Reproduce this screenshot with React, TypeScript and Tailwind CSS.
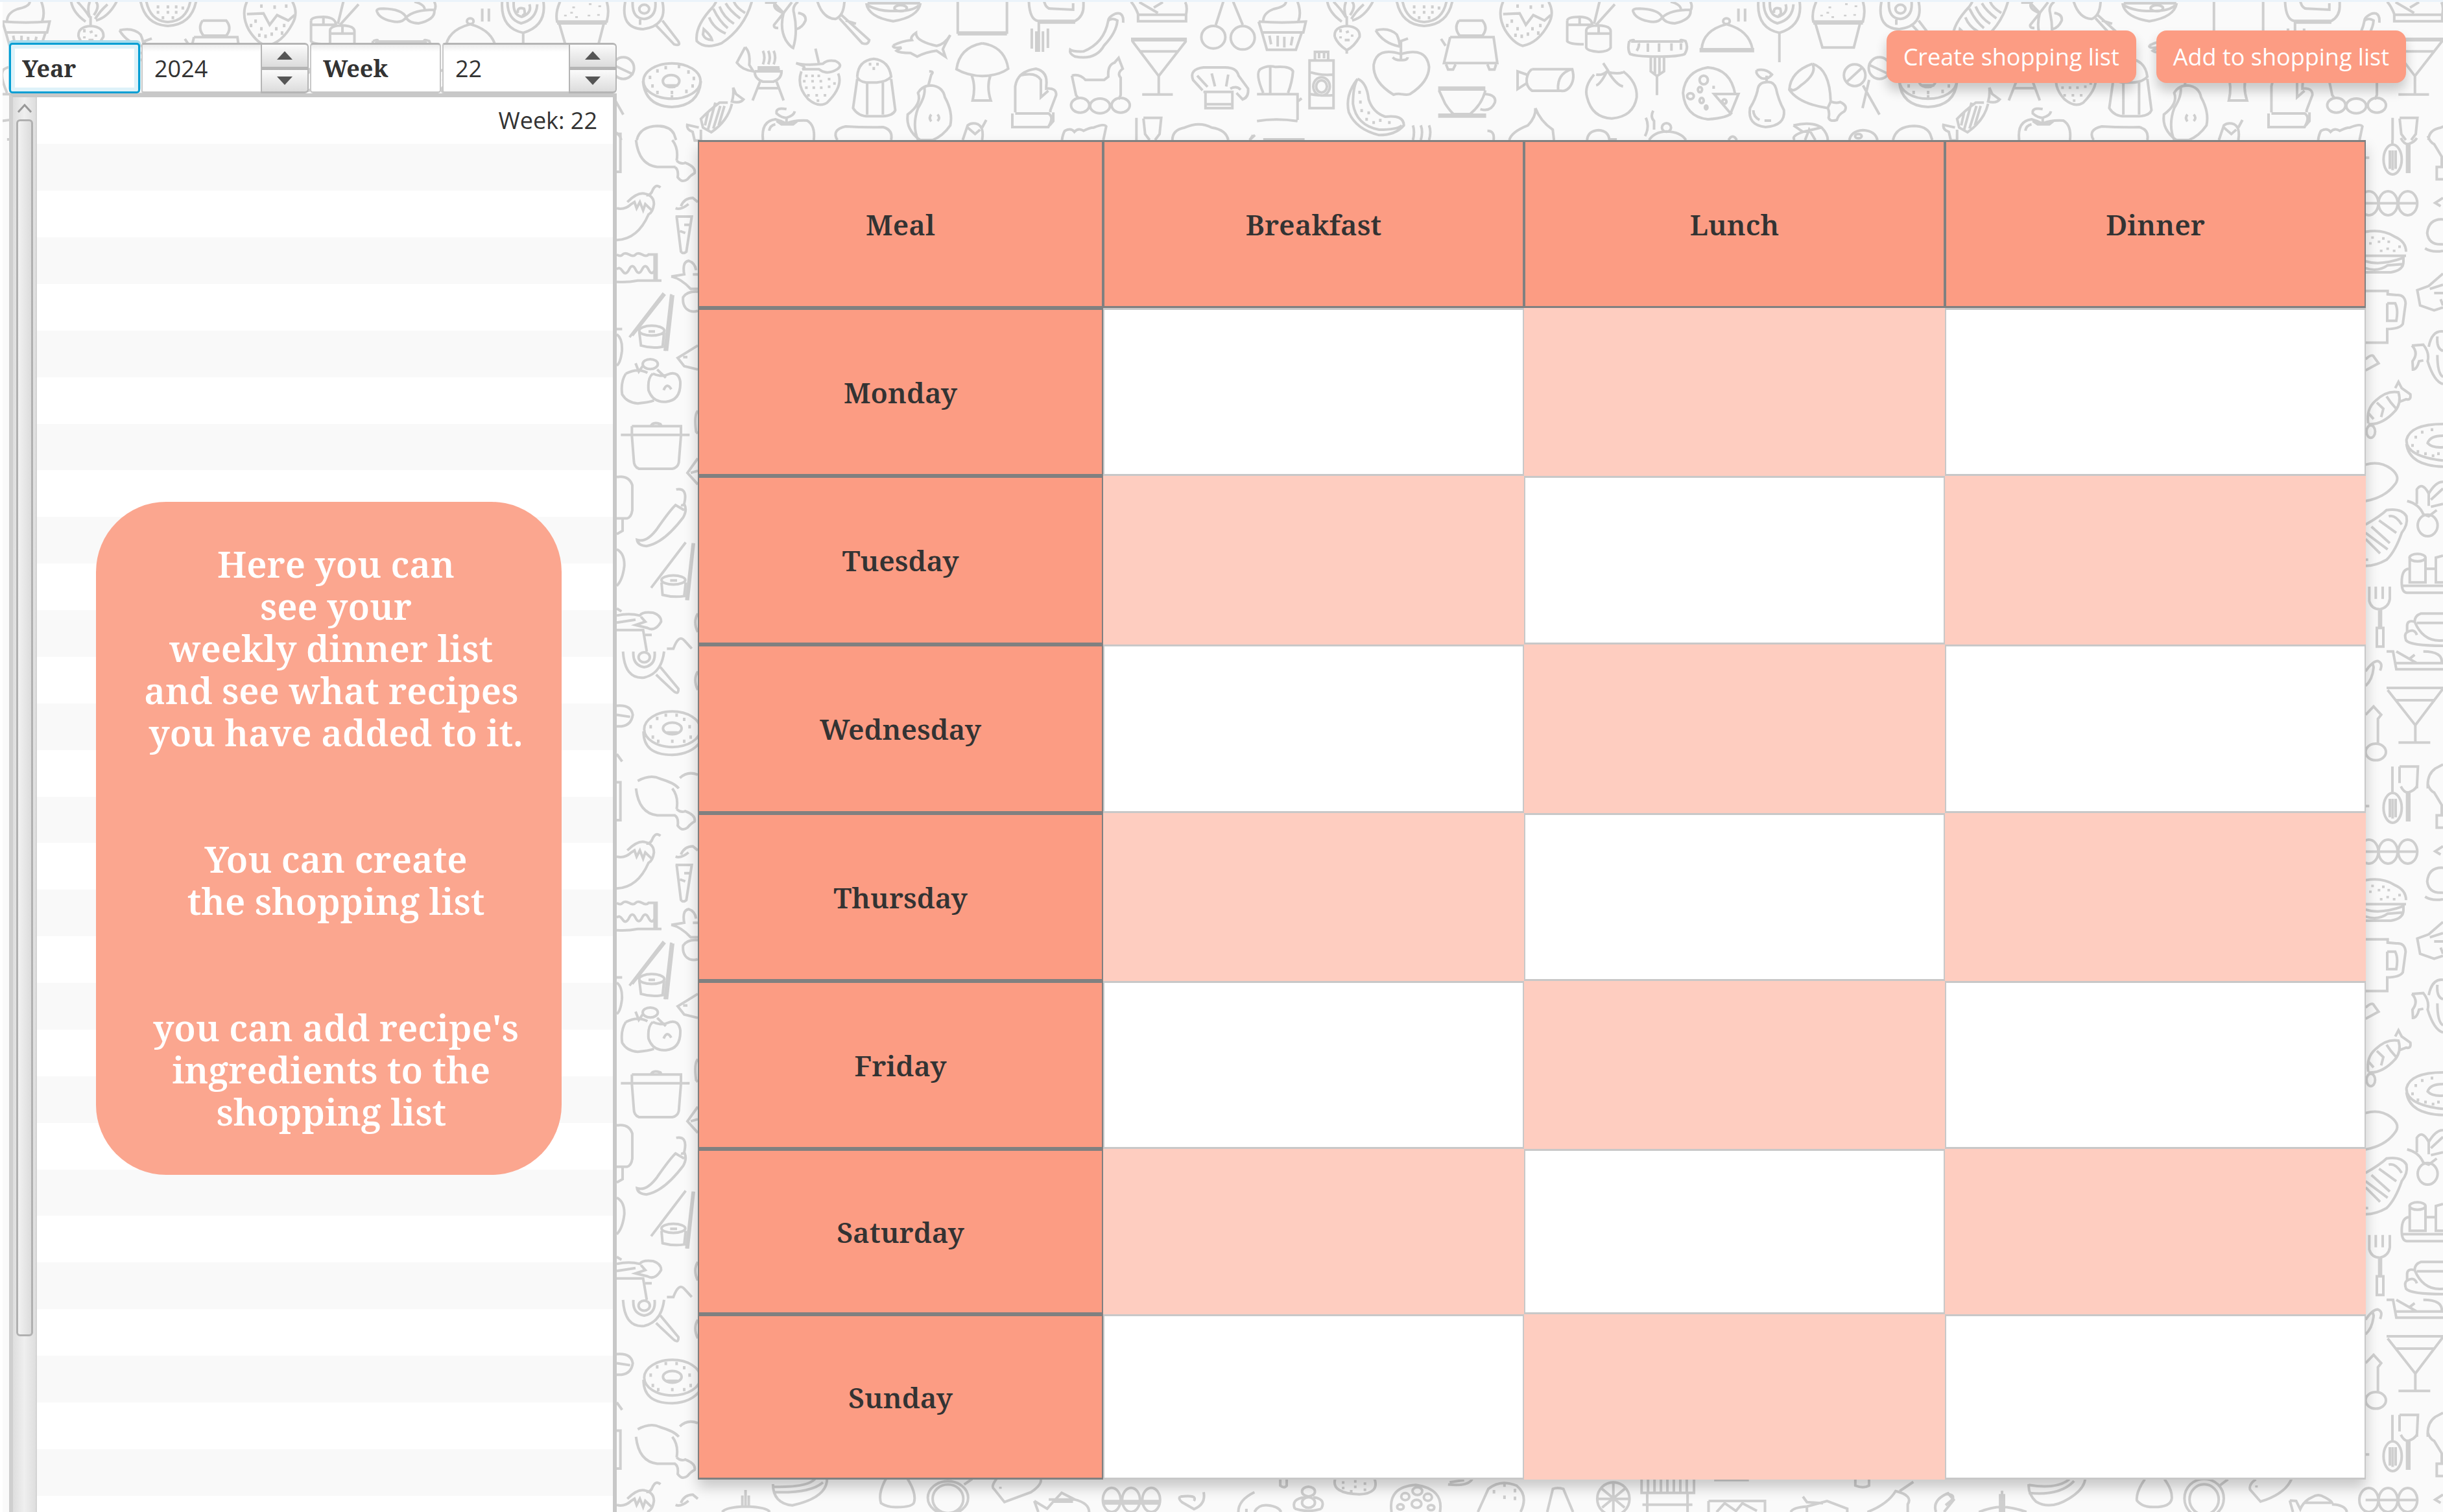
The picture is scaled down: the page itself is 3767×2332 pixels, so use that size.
import { useState } from 'react';

const oval = (cx: number, cy: number, rx: number, ry: number) =>
  `M${cx - rx} ${cy}a${rx} ${ry} 0 1 0 ${rx * 2} 0a${rx} ${ry} 0 1 0 ${-rx * 2} 0`;

const dots = (size: number, ...points: [number, number][]) =>
  points.map(([x, y]) => `M${x} ${y}v${size}`).join('');

/* Food doodles, upper band, first half of the repeat */
const upperLeft = [
  // cupcake
  'M64 100Q120 108 178 100L172 150H72L64 100M75 98Q75 60 100 42Q130 30 130 8M158 8Q168 60 160 98M72 150L84 230H154L168 152M90 165L94 205M110 165V215M126 170V220M146 170L142 210',
  // radish
  'M230 8Q235 60 265 100M245 8Q262 40 275 80Q268 40 275 8M290 8Q300 30 285 70M340 8Q320 80 290 95M318 20Q300 50 288 88M277 75V120M248 170Q245 125 277 120Q310 125 308 170Q295 215 277 232Q255 205 248 170M277 232V248M262 135V150M275 150L282 145M290 160V170M262 168V178M272 185H284',
  // watermelon
  'M398 8Q410 115 464 120Q520 115 532 8M412 8Q422 98 464 102Q508 98 518 8' +
    dots(14, [440, 25], [464, 25], [484, 25], [440, 50], [464, 50], [484, 50], [452, 75], [476, 75], [500, 30]),
  // apple
  'M408 250Q350 215 342 300Q340 380 390 438Q400 432 410 436Q425 440 430 435Q475 380 476 310Q470 215 408 250M388 265Q395 280 408 278Q424 280 424 265M408 275V190L425 178M347 140Q380 125 398 160Q405 190 405 215Q365 200 347 140',
  // mixer
  'M548 95H605Q620 130 605 165H550Q535 130 548 95M527 172H632L641 292H512L527 172M505 180L516 212M517 298L522 322H534L540 298M617 298L622 322H634L638 298',
  // decorated egg
  'M655 8Q640 70 660 140Q680 200 702 212Q740 200 765 110Q780 60 765 8M655 65L695 62L710 115L728 70L755 95L770 70' +
    dots(16, [690, 20], [722, 25], [750, 20], [676, 90], [690, 125], [665, 110], [726, 125], [745, 110], [700, 160], [715, 150], [740, 145], [685, 155]),
  // shakers
  'M810 95Q812 78 840 78Q868 80 870 110V125M810 95V190Q815 205 850 205M812 115H870M840 80V115M856 140Q858 118 886 118Q915 120 915 145V220Q910 238 886 240Q858 236 856 220ZM858 155H914M886 120V150M888 8L875 110M925 20L880 115',
  // beans
  'M970 55Q965 40 985 40Q1030 42 1040 80Q1030 110 1005 98Q975 85 970 55M1040 80Q1060 45 1108 45Q1112 90 1070 108Q1045 105 1040 80M1060 8Q1085 20 1085 45M1108 8Q1114 30 1108 50',
  // sausage on a fork
  'M960 190Q955 230 962 250Q980 262 1028 262Q1080 262 1094 250Q1104 220 1096 190Q1080 180 1085 192H970Q975 180 960 190M978 235Q985 215 983 200M1005 200V240M1032 200V240M1062 200V235M1085 200V230M1012 264V330L1027 352L1044 330V264M1022 264V345M1033 264V345M1027 352V440',
  // cloche
  'M1130 228H1262M1130 236H1262M1135 228Q1138 140 1195 112Q1250 140 1258 228M1224 40V100M1240 40V100' + oval(1195, 98, 8, 13),
  // lollipop
  'M1272 8Q1268 130 1323 152Q1380 120 1372 8M1285 8Q1285 90 1318 108Q1355 90 1357 20M1300 8Q1298 70 1320 78Q1345 60 1338 20M1310 60Q1308 30 1325 40Q1330 70 1320 72M1323 155V288',
  // ice cream tub
  'M1412 8Q1400 60 1405 100H1525Q1532 50 1525 8M1405 108H1525M1410 108L1427 220H1503L1518 108' +
    dots(8, [1445, 30], [1440, 55], [1425, 68], [1452, 75], [1485, 15], [1508, 25], [1482, 68], [1505, 65]),
  // ketchup
  'M200 275V240H232V275M187 500V280H245V500ZM190 335Q215 350 245 345M187 435Q215 445 245 440M210 245V270M222 245V270' + oval(216, 400, 20, 42) + oval(216, 400, 13, 28),
  // muffin pot
  'M75 430Q55 340 68 320Q85 300 105 310Q140 305 147 330Q145 380 135 430M92 430V312M60 436H158V555M60 560Q105 545 158 560M158 470L168 455',
  // melon slice
  'M303 365Q325 380 330 460Q340 520 370 540Q415 530 415 580Q395 625 355 625Q300 600 282 520Q272 440 303 365M303 365Q292 400 292 480Q300 580 355 600Q400 600 410 580' +
    dots(14, [308, 420], [310, 465], [313, 505], [330, 515], [325, 545], [342, 560], [358, 550], [380, 560]),
  // cup
  'M498 406H612M498 414H612M500 418L515 480Q525 510 535 528H575Q605 480 612 418M612 435Q640 440 635 475Q625 520 600 505M498 531H614M498 539H614',
  'M437 580Q442 610 437 648M456 580Q462 610 456 648M476 580Q482 610 476 648',
  // roll
  'M725 320H822Q830 370 815 405Q805 425 795 420H725Q710 400 712 365Q715 330 725 320M822 320Q785 340 788 415M712 345L690 330V412L712 385',
  // tomato
  'M897 292L910 330M880 345Q895 350 905 332Q930 345 945 335M905 335Q890 390 880 395M910 335Q930 395 945 400M875 345Q850 400 858 450Q870 545 918 548Q970 540 978 450Q980 380 945 330',
  // pizza
  'M1216 435Q1205 320 1150 312Q1095 330 1090 430Q1095 540 1150 552Q1200 545 1208 520M1165 435H1224L1205 525Z' +
    oval(1140, 370, 10, 20) + oval(1108, 445, 8, 14) + oval(1135, 465, 5, 12) + oval(1131, 415, 5, 12) + oval(1146, 497, 3, 9) + oval(1190, 470, 5, 10) + dots(14, [1164, 397]),
  // pear
  'M1292 380Q1272 380 1270 420Q1265 460 1252 500Q1245 580 1290 588Q1338 580 1334 510Q1320 460 1315 410Q1310 375 1292 380M1292 375V350M1268 325Q1290 315 1305 345Q1295 370 1280 362Q1265 345 1268 325M1260 510Q1260 540 1275 555M1287 558H1303',
  // ham
  'M1403 295Q1445 320 1447 470L1440 500Q1370 480 1347 415Q1350 330 1403 295M1403 295Q1415 340 1375 395Q1355 430 1350 410M1447 470Q1460 480 1470 472Q1490 490 1480 515Q1465 530 1462 555Q1445 565 1442 545Q1445 520 1440 500',
  // balloons of parsley
  oval(1505, 348, 26, 50) + oval(1565, 315, 26, 50) + 'M1485 380L1525 310M1540 300L1590 345M1525 395L1565 530M1540 370L1524 500',
  // tops of the next row
  'M733 500Q735 540 715 580Q675 610 670 648M733 500Q745 560 775 600L778 648M617 605Q635 605 632 648M858 648Q860 605 886 602Q910 605 912 648M912 645H930',
  'M1000 545Q1010 585 998 630M1018 512Q1010 540 1020 560V600M1008 648Q1020 610 1050 608Q1085 610 1097 648M1200 648Q1210 615 1220 648' + oval(1050, 590, 11, 20),
  'M1357 580Q1400 560 1425 590Q1440 620 1440 648M1357 580L1380 610Q1350 630 1360 648M1380 610L1425 590M1385 648L1395 600L1410 648M1492 648Q1497 605 1525 602Q1555 605 1560 648M55 625L42 648M75 645H175' + oval(1514, 630, 8, 10),
];

/* Food doodles, upper band, second half of the repeat */
const upperRight = [
  // pan with egg
  'M22 8Q10 130 65 135Q125 120 112 8M40 8Q38 85 68 88Q98 80 95 8M58 90V115M112 95L150 190Q158 215 140 205L97 118' + oval(68, 42, 12, 20),
  // bread
  'M235 30Q190 120 195 190Q215 230 255 200Q310 130 328 8M235 30L242 8M235 40Q250 100 270 130M225 80Q235 130 265 155M212 135Q230 165 232 185Q215 185 210 160ZM265 15Q275 50 300 85M285 8Q290 35 312 60M250 30Q260 80 285 110',
  // leek
  'M360 12H385Q375 40 405 60L425 10M385 20L405 60L382 115Q380 130 392 130M405 60Q395 130 410 185Q420 215 428 222Q440 150 430 60M430 60Q425 30 440 8M440 60Q460 65 458 95Q450 130 435 135',
  // pan
  'M487 8Q500 85 530 88Q550 75 552 8M545 70L612 185Q610 210 595 200L540 85M555 95L580 110',
  // bowl
  'M605 15Q610 80 670 98Q730 80 736 15M608 25Q640 55 672 50Q715 55 732 25M608 15H735' + oval(688, 38, 15, 14),
  // fish
  'M670 210Q690 190 715 185Q710 170 725 152Q725 175 740 190Q755 205 775 212Q795 205 808 162Q795 205 790 228L796 262L775 235Q750 240 728 262L712 245Q685 245 678 235L690 220Q668 225 670 210',
  'M826 8V151H945V8M826 158H945',
  // jar and fork
  'M998 8Q1000 90 1020 97H1110Q1130 75 1130 30V8M1020 104H1110M1035 8Q1040 40 1050 40L1105 45V15M1022 100V240M1005 132V225M1016 145V240M1032 145V240M1044 132V222',
  // chili
  'M1205 65Q1228 50 1226 105M1205 65Q1190 80 1190 95Q1180 200 1130 238Q1105 240 1098 230Q1095 250 1110 262Q1160 280 1180 210Q1210 150 1212 95Q1200 80 1190 95',
  // cake
  'M1245 8Q1255 30 1262 65V98H1378V68H1262M1378 68Q1382 30 1376 10M1265 10L1310 60M1300 35L1322 10',
  // martini
  'M1245 180H1380M1245 186H1380M1248 190L1312 352L1378 190M1265 238H1358M1312 352V435M1272 437H1346',
  // spoons
  'M1468 8L1450 115M1492 8L1515 115' + oval(1444, 172, 29, 52) + oval(1515, 175, 29, 54),
  // donut
  oval(135, 375, 69, 82) + 'M65 375Q70 490 135 495Q200 490 205 375M118 395H150M125 402H143' + oval(133, 375, 20, 28) +
    dots(16, [100, 320], [82, 350], [120, 305], [152, 300], [175, 325], [188, 355], [88, 390], [100, 420], [135, 420], [170, 415], [185, 390], [135, 440]),
  // barbecue
  'M312 218Q325 240 322 300L332 330Q305 325 292 290Q300 260 312 218M355 235Q362 265 355 298M368 235Q375 265 368 298M381 235Q388 265 381 298M342 312H395M342 320H396M335 330H400Q400 365 380 378H355Q335 365 335 330M348 378L330 465M388 378L405 465M343 408H392',
  // strawberry
  'M482 225L490 290M435 292Q460 305 500 295Q510 275 530 282Q550 300 535 320Q510 350 490 320H450Q465 310 435 292M448 330Q435 400 465 460Q490 500 510 475Q550 400 537 340' +
    dots(12, [460, 345], [475, 345], [490, 345], [455, 370], [475, 370], [495, 370], [515, 360], [460, 400], [478, 400], [496, 400], [515, 395], [465, 435], [485, 435], [505, 435], [488, 460], [528, 380]),
  // salt
  'M583 355Q585 280 623 272Q660 280 665 355Q655 378 630 382H605Q585 375 583 355M583 365L573 500Q585 538 610 538H645Q670 535 675 510L665 365M607 382V530M645 382V530' +
    dots(14, [614, 290], [632, 290], [623, 310]),
  // avocado
  'M757 330Q770 330 762 345L755 395M762 395Q790 400 795 450Q815 520 808 580Q790 630 765 648H735Q700 600 705 530Q740 480 730 430Q740 395 762 395M745 400Q750 440 730 500Q715 580 730 648M762 530Q755 545 762 562M777 530Q785 545 777 560',
  // mushroom
  'M885 200Q830 220 823 320Q850 350 885 352Q925 350 948 318Q940 215 885 200M860 350Q870 400 862 465H906Q895 400 905 350',
  // oven glove
  'M965 520V400Q970 330 1015 318Q1045 330 1040 400V410Q1065 405 1064 440L1050 510V520M965 525H1045Q1060 540 1045 588H958V525M975 350Q1015 330 1027 370V450L1045 420M1057 520V560L1048 580',
  // grapes
  'M1102 350L1112 440L1118 455M1102 350Q1120 340 1135 370H1180L1190 355Q1188 300 1205 290L1215 268L1225 318Q1210 340 1220 360V440L1215 460' + oval(1122, 487, 22, 34) + oval(1170, 490, 24, 34) + oval(1220, 487, 22, 34),
  // chef hat
  'M1418 418L1395 370Q1385 320 1420 312H1470Q1500 310 1505 350L1528 410Q1530 450 1515 460L1500 430M1420 425H1490V500H1425V425M1405 350L1430 402M1440 340L1448 400M1480 345L1475 400M1485 410Q1500 395 1510 415M1425 482H1490',
  // candy
  'M283 405L290 435L308 460Q300 480 280 470Q285 440 283 405M270 475H250Q225 510 205 550L210 590L230 612Q270 560 280 480M200 590L172 578Q170 600 185 610L190 650H205V600M240 475L222 600M252 490L235 595M262 490L248 580M222 520L215 580',
  // small apple
  'M412 505Q385 495 388 525Q400 545 412 545Q430 535 432 515M412 545V575M355 648Q350 560 385 552Q400 560 412 572Q430 555 462 558Q482 580 478 648M388 560L400 575H428L438 560M370 605Q372 580 385 575',
  'M535 648Q520 600 555 585Q600 590 645 588Q670 600 665 648',
  'M838 648L850 580Q860 565 875 575Q890 590 885 648M895 555L885 590M850 590L868 620L880 600',
  'M1078 648Q1080 620 1085 605Q1100 590 1108 610Q1118 590 1130 605Q1145 590 1155 590Q1180 570 1185 585L1178 648',
  'M1258 545V648M1275 545H1318L1314 620L1303 648M1275 548L1279 620L1290 648',
  'M1345 648Q1345 600 1375 590Q1410 560 1440 590Q1475 600 1480 648M1540 625L1532 648',
  'M100 583Q130 583 140 620L145 648M100 583Q58 585 50 648',
];

/* Doodles between the side panel and the planner */
const middleColumn = [
  'M310 75Q320 45 290 25M122 25Q135 85 220 90H305M310 75Q330 85 350 80Q400 90 393 105Q375 110 360 120Q335 130 315 115Q320 95 300 90',
  'M33 10H50V102H33',
  'M235 140Q215 130 200 145Q190 160 170 158M82 175Q130 150 165 155Q205 160 205 180Q200 200 180 205Q130 265 33 267M33 190Q70 195 100 180L115 175L125 190L140 175L155 195L165 180L195 195',
  'M305 190Q330 195 365 180M330 185Q345 165 385 165L408 175M305 210H380L355 295Q340 302 330 295L310 210M325 245L350 250M345 230H370',
  'M33 302Q50 308 60 302T90 302T120 302T150 302T180 302H217V362M33 338Q45 330 60 342T90 338T120 338T150 338T180 338T208 340M208 302V362M33 368Q80 370 130 365H240',
  'M285 355Q330 360 375 385H408M285 355L345 350Q335 320 365 317Q395 322 400 340M385 350H408M408 392Q360 390 340 405Q335 430 370 438Q390 442 408 438',
  'M92 502L250 395M105 498L256 398M285 398L255 535M294 400L265 535M137 488L145 522Q195 530 245 525L252 490M180 488H210' + oval(195, 486, 58, 12),
  'M33 482H58M33 495Q60 505 57 535Q50 565 33 570',
  'M120 565L135 585L155 570M75 590Q50 610 58 640Q80 660 130 662Q180 660 205 655M75 590Q130 575 175 588M220 580L260 600M200 590Q175 600 180 630Q200 660 260 658Q330 655 327 610Q320 585 280 590Q240 600 200 590M250 630Q265 610 285 628' + oval(188, 567, 35, 12),
  'M408 522L315 552L345 572L408 580M340 550H360',
  'M103 717H330V740L320 805Q315 818 290 820H135Q112 815 112 800L103 740V717M52 738H370M190 717Q200 705 235 712L240 717',
  'M408 680Q390 690 400 730L408 735M408 795L360 830L408 858M375 830L408 825',
  'M33 840Q90 835 105 860V920Q100 938 80 940H33M33 978L60 970V940',
  'M308 870Q360 865 347 900Q345 910 330 908M345 905Q360 920 340 938Q250 1000 170 1007Q130 1005 127 992Q170 1000 220 965Q280 920 305 908L345 920',
  'M192 1108L352 998M385 1000L355 1138M390 1000L362 1138M240 1095L245 1125Q295 1132 345 1128L352 1095M280 1090H312' + oval(295, 1089, 55, 11),
  'M33 1015Q70 1025 68 1055Q60 1090 33 1103M408 1170Q385 1190 408 1215M408 1310Q385 1330 408 1355',
  'M33 1158L55 1165M33 1175Q90 1168 140 1175Q150 1165 200 1168Q240 1175 238 1190Q210 1215 175 1205L120 1198L165 1190L145 1178M33 1192L120 1185',
  'M33 1210H155L172 1262M165 1222H195M265 1255H295Q320 1220 345 1235L380 1255',
  'M62 1262Q70 1330 160 1325Q240 1315 252 1262M110 1262Q105 1295 160 1300Q215 1295 208 1262M235 1300L318 1352Q320 1370 290 1355L215 1318' + oval(160, 1276, 26, 12),
  'M33 1393Q100 1390 107 1415Q100 1445 33 1443M33 1415L95 1420M33 1510L58 1528',
  oval(290, 1450, 130, 43) + oval(290, 1448, 43, 14) + 'M157 1455Q155 1512 290 1512Q380 1510 420 1480M265 1458H315' +
    dots(8, [220, 1420], [190, 1440], [260, 1412], [310, 1412], [345, 1422], [370, 1440], [200, 1465], [225, 1475], [290, 1475], [345, 1475], [375, 1465]),
  'M130 1575Q190 1558 235 1570Q300 1580 320 1593M325 1568Q360 1550 408 1560',
];

/* Doodles to the right of the planner */
const rightColumn = [
  'M207 25V35M195 50V95M208 50V98M222 50V95M275 105V35M285 105V35M246 20Q260 35 280 35Q310 30 320 20M83 68H100' + oval(208, 72, 42, 36),
  'M371 15Q380 30 400 35L435 65V90H412V120H441',
  oval(98, 178, 44, 29) + oval(187, 178, 44, 29) + oval(278, 178, 44, 29) + 'M83 178H322',
  'M441 165L405 177L430 185M441 217Q375 215 368 250Q375 280 441 277M358 287Q390 298 441 293',
  'M83 247Q160 240 215 258Q270 270 270 295M83 305H270M83 318Q150 330 258 310M83 335Q140 345 185 328L258 325M83 345H200Q258 340 258 320V305' +
    dots(6, [115, 258], [145, 268], [165, 260], [190, 268], [155, 290], [185, 285], [215, 290], [240, 280], [105, 272]),
  'M83 390H185V398L225 400Q265 398 268 420L255 470Q240 482 183 482V515H83M183 420H220Q235 435 225 462H183V420',
  'M441 348L375 378L322 388L335 425L400 437L441 430M441 375L380 385M400 395H441M430 410L441 425',
  'M83 555Q115 540 122 550L143 565L83 582M297 522L350 520Q380 540 370 560Q400 610 441 615M297 522Q330 540 300 560L302 580Q320 580 330 560L350 558M375 525Q390 485 441 488M415 500Q410 530 441 535M415 545Q415 590 441 598',
  'M95 710Q85 675 130 655Q180 630 235 635Q250 660 220 680Q160 715 95 712M135 660L165 675L155 695M180 645L200 660L225 675M95 685L120 700M220 625L235 610L250 625L290 640Q295 655 270 652L240 658' + oval(107, 730, 20, 15),
  'M441 712Q290 712 272 750Q270 790 441 800M272 760Q285 812 441 815M441 740Q380 740 370 758Q390 770 441 768' +
    dots(7, [345, 728], [315, 740], [300, 760], [325, 775], [360, 780], [395, 785], [390, 722], [420, 780]),
  'M83 810Q150 800 200 820Q250 840 215 860Q170 890 83 898',
  'M83 955Q150 935 180 920Q250 915 272 935Q280 955 250 975Q220 1020 180 1040Q130 1055 83 1055M145 945L225 975M190 935Q220 930 250 955M110 960L195 1000M83 975L185 1015M83 990L150 1025M83 1040H95',
  'M275 898Q330 905 350 930L375 935L412 920M320 905V870Q345 850 375 880V910M375 880Q410 850 441 852M441 868L385 895M385 912L441 905' + oval(370, 957, 46, 26),
  'M441 1120H275Q250 1120 250 1095Q250 1062 285 1062M255 1103H441M287 1035V1095H360V1035M441 1030L408 1035V1095H441M362 1062H405' + oval(323, 1035, 37, 9),
  'M100 1105V1140Q110 1160 150 1160Q190 1155 195 1135V1105M130 1105V1135M162 1105V1135M146 1160V1205M154 1160V1205M135 1205H165V1250H135Z',
  'M441 1170H340Q310 1175 310 1190Q350 1240 441 1235M310 1190Q275 1185 275 1200V1215Q260 1220 270 1235Q290 1248 441 1248M441 1193H320M275 1215Q310 1205 320 1222',
  'M180 1262H210L225 1305H441M222 1290H441M225 1262L320 1290M285 1280L310 1270M350 1262Q441 1262 435 1290',
  'M83 1310Q115 1285 140 1285Q165 1290 150 1308M83 1345Q115 1330 120 1300L115 1290',
  'M180 1350H441M185 1355L313 1440L441 1352M225 1380H405M313 1440V1482M235 1482H382',
  'M83 1415L120 1395L155 1415L140 1425V1485' + oval(130, 1505, 47, 20),
  'M207 1540V1593M240 1540H325L320 1593M240 1540V1580',
  'M371 1593Q365 1560 405 1545L441 1535',
];

/* Doodles under the planner, left part */
const lowerLeft = [
  'M64 65V140M60 90V140M68 90V140M35 165Q40 142 64 140Q90 142 94 165',
  'M165 15Q165 100 122 135Q98 125 98 38M150 15Q140 55 98 50M160 30Q145 80 100 75',
  'M238 15Q228 80 232 125Q240 145 252 143Q272 142 273 120Q276 80 265 15',
  oval(315, 100, 25, 75) + oval(315, 105, 19, 65) + 'M335 40L345 15',
  'M375 15Q368 50 372 60L385 120L418 75Q432 40 430 15M380 50V60',
  'M422 115L427 165M422 115L438 150L445 120L456 78L472 108H440M472 108Q490 125 490 165M445 118H470',
  oval(518, 110, 11, 55) + oval(542, 110, 11, 55) + oval(567, 110, 11, 55) + 'M508 116H578M508 126H578',
  'M603 95Q625 85 620 115M632 75Q635 130 620 152L605 120Q600 105 603 95',
  'M675 165Q675 110 695 75M695 165Q700 130 712 135Q725 140 728 165M685 150V165',
  'M727 15V45Q732 60 735 45V15',
  oval(762, 72, 8, 22) + oval(762, 122, 8, 24) + 'M745 150Q740 105 758 98M778 150Q784 105 768 98M745 150Q762 170 778 150',
  'M795 15Q790 80 825 85Q850 80 844 15' + dots(12, [805, 25], [805, 50], [820, 20], [820, 45], [832, 30], [832, 58], [815, 65]),
  'M865 165Q860 50 895 42Q930 60 925 165' + oval(897, 70, 6, 18) + oval(882, 95, 5, 16) + oval(910, 98, 5, 16) + oval(896, 128, 6, 18) + oval(876, 142, 4, 12) + oval(914, 145, 4, 12),
  'M935 40Q960 50 965 15M937 30L955 20',
  'M972 165L985 60Q1000 15 1020 45Q1035 90 1025 165' + dots(16, [1005, 35], [992, 65], [1005, 90], [1018, 60], [1018, 95]),
  'M1058 165L1065 60Q1070 52 1078 60L1090 165',
  oval(1140, 105, 20, 75) + 'M1120 105H1160M1140 30V165M1126 60L1154 145M1154 60L1126 145',
  'M1175 15V78H1240V15M1182 78V165M1232 78V165M1176 132H1238' + dots(56, [1183, 18], [1191, 18], [1199, 18], [1207, 18], [1215, 18], [1223, 18], [1231, 18]),
  'M1265 20H1308',
  'M1258 115H1328V165M1258 115V165M1268 165L1278 125L1292 160L1300 125L1318 160',
  'M1375 95L1380 120L1400 125M1360 165Q1362 145 1380 140L1405 115L1430 150V165M1380 165V140',
  'M1440 15V45Q1450 60 1457 45V15',
  'M1512 28L1495 70M1455 165Q1480 130 1490 70Q1512 90 1505 130V165',
  'M1540 165Q1535 110 1555 80L1562 110L1550 165',
];

/* Doodles under the planner, right part */
const lowerRight = [
  'M0 1210Q30 1210 22 1235L0 1262',
  'M178 1195V1293M172 1210V1293M184 1210V1293M105 1293Q150 1268 178 1270Q210 1270 255 1293',
  'M262 1165Q260 1210 285 1245Q330 1285 390 1230Q435 1190 440 1142M262 1168Q350 1190 390 1142M262 1205Q360 1220 405 1150',
  'M628 1142Q600 1200 603 1240Q620 1272 658 1270Q710 1270 713 1230Q715 1190 690 1142',
  oval(815, 1230, 62, 90) + oval(815, 1235, 46, 70) + 'M865 1170L890 1142',
  'M978 1142Q955 1165 960 1190L993 1245Q1070 1210 1090 1142M980 1170V1180',
  'M1085 1240L1095 1293M1085 1240L1105 1242L1118 1280Q1130 1240 1155 1225Q1175 1205 1195 1225Q1215 1240 1218 1250H1130M1218 1258Q1260 1260 1265 1293',
];

type Patch = { x: number; y: number; w: number; h: number; box: string; art: string[] };

const patches: Patch[] = [
  { x: -37, y: 0, w: 1000, h: 320, box: '0 0 1568 960', art: upperLeft },
  { x: 1900, y: 0, w: 1000, h: 320, box: '0 0 1568 960', art: upperLeft },
  { x: 950, y: 0, w: 1000, h: 320, box: '0 0 1568 960', art: upperRight },
  { x: 2887, y: 0, w: 1000, h: 320, box: '0 0 1568 960', art: upperRight },
  ...[200, 1200, 2200].flatMap((y) => [
    { x: 940, y, w: 160, h: 1000, box: '0 0 480 1568', art: middleColumn },
    { x: 3620, y, w: 147, h: 1000, box: '0 0 441 1568', art: rightColumn },
  ]),
  { x: 1070, y: 2276, w: 1950, h: 56, box: '0 0 1568 165', art: lowerLeft },
  { x: 3000, y: 1900, w: 767, h: 432, box: '0 0 1568 1293', art: lowerRight },
];

function Wallpaper() {
  return (
    <svg aria-hidden="true" className="absolute inset-0 h-full w-full" fill="none" stroke="#cfcfcf" strokeWidth="4">
      {patches.map((p, i) => (
        <svg key={i} x={p.x} y={p.y} width={p.w} height={p.h} viewBox={p.box} preserveAspectRatio="none" overflow="visible">
          {p.art.map((d, j) => (
            <path key={j} d={d} vectorEffect="non-scaling-stroke" />
          ))}
        </svg>
      ))}
    </svg>
  );
}

const arrowButton =
  'flex flex-1 items-center justify-center border-2 border-t-[3px] border-[#b5b5b5] bg-linear-to-b from-[#fbfbfb] to-[#dcdcdc]';

function Spinner({ label, value, onChange, className }: { label: string; value: number; onChange: (n: number) => void; className: string }) {
  return (
    <div className={`flex h-full ${className}`}>
      <input
        aria-label={label}
        value={value}
        onChange={(e) => onChange(Number(e.target.value) || 0)}
        className="h-full w-full min-w-0 flex-1 rounded-l-[4px] border-y-[3px] border-l-2 border-[#c8c8c8] border-t-[#b5b5b5] bg-linear-to-b from-[#ececec] to-white to-15% pl-[18px] text-[36px] text-[#333] outline-none"
      />
      <div className="flex w-[74px] flex-col">
        <button type="button" aria-label={`Next ${label}`} onClick={() => onChange(value + 1)} className={`${arrowButton} rounded-tr-[6px]`}>
          <svg width="26" height="14" viewBox="0 0 26 14" fill="#555"><path d="M13 0L25 13H1z" /></svg>
        </button>
        <button type="button" aria-label={`Previous ${label}`} onClick={() => onChange(value - 1)} className={`${arrowButton} rounded-br-[6px] border-b-[3px]`}>
          <svg width="26" height="14" viewBox="0 0 26 14" fill="#555"><path d="M13 14L25 1H1z" /></svg>
        </button>
      </div>
    </div>
  );
}

const notes = [
  ['Here you can', 'see your', 'weekly dinner list ', 'and see what recipes ', 'you have added to it.'],
  ['You can create', 'the shopping list'],
  ["you can add recipe's", 'ingredients to the ', 'shopping list '],
];

function SidePanel() {
  const [year, setYear] = useState(2024);
  const [week, setWeek] = useState(22);
  return (
    <aside className="relative ml-[14px] flex w-[937px] shrink-0 flex-col pt-[66px]">
      <div className="flex h-[78px] gap-[2px]">
        <input
          aria-label="Year label"
          defaultValue="Year"
          className="h-full w-[202px] rounded-[5px] border-[3px] border-[#039ed3] bg-white pl-[17px] font-['Noto_Serif',serif] text-[36px] font-bold text-[#333] shadow-[0_-3px_0_1px_#a9dcec,inset_0_0_0_6px_#def2f9] outline-none"
        />
        <Spinner label="year" value={year} onChange={setYear} className="w-[258px]" />
        <input
          aria-label="Week label"
          defaultValue="Week"
          className="h-full w-[202px] rounded-[5px] border-x-2 border-y-[3px] border-[#c8c8c8] border-t-[#b5b5b5] bg-linear-to-b from-[#ececec] to-white to-15% pl-[18px] font-['Noto_Serif',serif] text-[36px] font-bold text-[#333] outline-none"
        />
        <Spinner label="week" value={week} onChange={setWeek} className="flex-1" />
      </div>

      <div className="flex min-h-0 flex-1 border-x-[6px] border-t-[6px] border-[#c8c8c8] border-l-[#cfcfcf]">
        <div className="flex w-[37px] shrink-0 flex-col items-center border-r-2 border-[#d4d4d4] bg-linear-to-r from-[#dedede] via-[#efefef] to-[#dedede]">
          <button type="button" aria-label="Scroll up" className="flex h-[34px] w-full items-center justify-center">
            <svg width="22" height="14" viewBox="0 0 22 14" fill="none" stroke="#999" strokeWidth="3"><path d="M1 13L11 2L21 13" /></svg>
          </button>
          <div className="h-[86%] w-[26px] rounded-[6px] border-[3px] border-[#b0b0b0] bg-linear-to-r from-[#f2f2f2] to-[#dcdcdc]" />
        </div>
        <ul className="flex-1 overflow-hidden bg-white">
          {Array.from({ length: 31 }, (_, i) => (
            <li key={i} className="flex h-[72px] items-center justify-end pr-6 text-[36px] text-[#333] even:bg-[#f9f9f9] [&:nth-child(8n)]:h-[71px]">
              {i === 0 && `Week: ${week}`}
            </li>
          ))}
        </ul>
      </div>

      <section className="absolute top-[774px] left-[134px] flex h-[1038px] w-[718px] flex-col gap-[130px] rounded-[108px] bg-[#fb9c83]/90 pt-[63px] pl-[22px] text-center font-['Noto_Serif',serif] text-[56px] leading-[65px] font-semibold whitespace-pre text-white">
        {notes.map((lines) => (
          <p key={lines[0]}>
            {lines.map((line) => (
              <span key={line} className="block">{line}</span>
            ))}
          </p>
        ))}
      </section>
    </aside>
  );
}

const meals = ['Breakfast', 'Lunch', 'Dinner'];
const days = [
  { name: 'Monday', height: 'h-[259px]' },
  { name: 'Tuesday', height: 'h-[260px]' },
  { name: 'Wednesday', height: 'h-[260px]' },
  { name: 'Thursday', height: 'h-[259px]' },
  { name: 'Friday', height: 'h-[259px]' },
  { name: 'Saturday', height: 'h-[255px]' },
  { name: 'Sunday', height: 'h-[255px]' },
];
const headCell = 'border-x-2 border-y-[3px] border-[#808080] bg-[#fc9c83] text-center font-semibold';

function Planner() {
  return (
    <table className="w-full table-fixed border-separate border-spacing-0 font-['Noto_Serif',serif] text-[44px] text-[#333] shadow-[0_12px_20px_rgba(0,0,0,0.2)]">
      <thead>
        <tr className="h-[259px]">
          <th scope="col" className={`${headCell} w-[24.3%]`}>Meal</th>
          {meals.map((meal) => (
            <th key={meal} scope="col" className={headCell}>{meal}</th>
          ))}
        </tr>
      </thead>
      <tbody>
        {days.map((day, r) => (
          <tr key={day.name} className={day.height}>
            <th scope="row" className={headCell}>{day.name}</th>
            {meals.map((meal, c) => (
              <td key={meal} className={(r + c) % 2 ? 'bg-[#fecdc0]' : 'border-x-2 border-y-[3px] border-[#c8c8c8] bg-white'} />
            ))}
          </tr>
        ))}
      </tbody>
    </table>
  );
}

const action =
  'h-[81px] rounded-[16px] bg-[#fc9c83] px-[26px] text-[36px] text-white shadow-[0_12px_18px_rgba(0,0,0,0.2)]';

export default function App() {
  return (
    <div className="relative flex h-screen overflow-hidden border-t-[3px] border-[#ebf3fa] bg-[#fafafa] font-['Open_Sans','Noto_Sans',sans-serif]">
      <div className="absolute -top-[3px] right-0 bottom-0 left-0 -z-0">
        <Wallpaper />
      </div>
      <div className="absolute inset-y-0 left-0 w-1 bg-white" />
      <div className="-mt-[3px] flex min-w-0 flex-1">
        <SidePanel />
        <main className="relative min-w-0 flex-1 pr-[119px] pl-[125px]">
          <div className="-mr-[62px] mb-[88px] flex justify-end gap-[31px] pt-[47px]">
            <button type="button" className={action}>Create shopping list</button>
            <button type="button" className={action}>Add to shopping list</button>
          </div>
          <Planner />
        </main>
      </div>
    </div>
  );
}
